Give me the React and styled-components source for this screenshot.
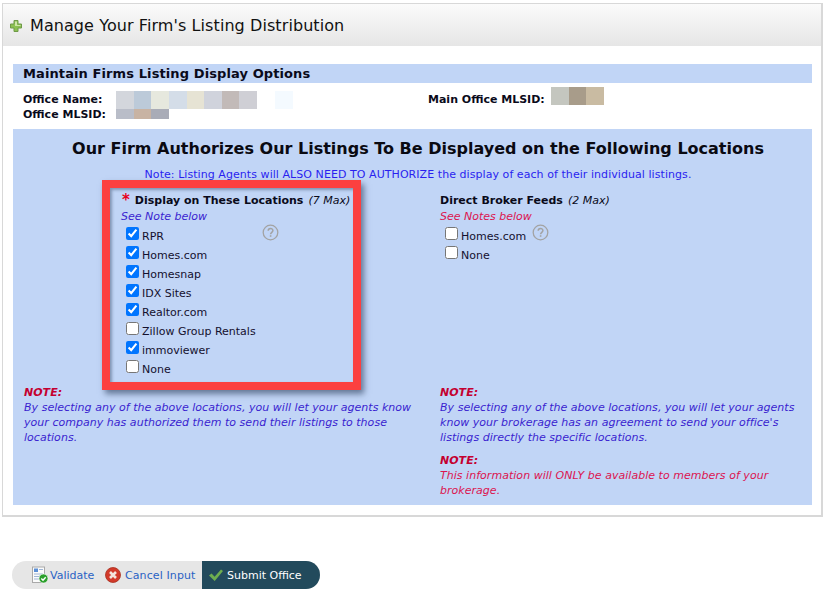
import React from "react";
import styled, { createGlobalStyle } from "styled-components";

const GlobalStyle = createGlobalStyle`
  html, body {
    margin: 0;
    padding: 0;
    background: #fff;
    font-family: "DejaVu Sans", Verdana, sans-serif;
    font-size: 11px;
    color: #000;
  }
`;

const Page = styled.div`
  width: 830px;
  height: 598px;
  padding: 3px 0 0 2px;
  box-sizing: border-box;
  overflow: hidden;
`;

const Panel = styled.div`
  width: 821px;
  height: 514px;
  box-sizing: border-box;
  border: 1px solid #d8d8d8;
  border-width: 1px 2px 2px 1px;
`;

const Header = styled.div`
  height: 42px;
  display: flex;
  align-items: center;
  gap: 7px;
  padding: 0 0 0 6px;
  background: linear-gradient(#fbfbfb, #e6e6e6);
  h1 {
    margin: 0;
    font-size: 16px;
    font-weight: 400;
    letter-spacing: 0.08px;
    color: #111;
  }
  svg {
    position: relative;
    top: 1px;
  }
`;

const Body = styled.div`
  padding: 18px 9px 0 10px;
`;

const Band = styled.div`
  height: 19px;
  line-height: 20px;
  background: #c1d5f6;
  padding-left: 10px;
  font-size: 13px;
  font-weight: 700;
  letter-spacing: 0.1px;
  color: #0a0a1a;
`;

const OfficeInfo = styled.div`
  display: grid;
  grid-template-columns: 405px 1fr;
  height: 46px;
  padding: 4px 0 0 10px;
  box-sizing: border-box;
`;

const InfoColumn = styled.div`
  padding-top: 4px;
`;

const InfoRow = styled.div`
  display: flex;
  align-items: center;
  height: ${(p) => p.$h}px;
  font-weight: 700;
  color: #0a0a1a;
`;

const InfoLabel = styled.span`
  width: ${(p) => p.$w}px;
  flex: none;
  margin-top: ${(p) => p.$mt || 0}px;
  margin-bottom: ${(p) => p.$mb || 0}px;
`;

const Mosaic = styled.div`
  display: flex;
  height: ${(p) => p.$h}px;
`;

const Tile = styled.div`
  width: ${(p) => p.$w || 17.625}px;
  margin-left: ${(p) => p.$gap || 0}px;
  background: ${(p) => p.$c};
`;

const BluePanel = styled.div`
  position: relative;
  height: 376px;
  background: #c1d5f6;
  padding-top: 10px;
  box-sizing: border-box;
`;

const Heading = styled.h2`
  margin: 0;
  padding-left: 11px;
  text-align: center;
  font-size: 16px;
  font-weight: 700;
  line-height: 20px;
  color: #0a0a12;
`;

const TopNote = styled.p`
  margin: 9px 0 0;
  padding-left: 11px;
  text-align: center;
  font-size: 11px;
  line-height: 14px;
  letter-spacing: 0.06px;
  color: #2a1ff0;
`;

const Columns = styled.div`
  display: grid;
  grid-template-columns: 427px 1fr;
  margin-top: 10px;
`;

const Column = styled.div`
  padding-left: ${(p) => p.$pad}px;
`;

const GroupTitle = styled.div`
  display: flex;
  align-items: center;
  height: 16px;
  font-weight: 700;
  color: #0a0a1a;
  i {
    font-weight: 400;
    margin-left: 5px;
  }
`;

const Star = styled.span`
  color: #e8001c;
  font-size: 15px;
  margin: 0 5px 0 1px;
`;

const SeeNote = styled.div`
  margin-top: 1px;
  height: 15px;
  line-height: 15px;
  font-style: italic;
  color: ${(p) => p.$c};
`;

const Options = styled.div`
  padding-left: ${(p) => p.$pad}px;
  margin-top: 3px;
  height: ${(p) => p.$h}px;
`;

const Option = styled.label`
  display: flex;
  align-items: center;
  height: 19px;
  color: #14102e;
  input {
    width: 13px;
    height: 13px;
    margin: 0 3px 0 0;
    position: relative;
    top: -3px;
    flex: none;
  }
  svg {
    margin-left: 6px;
    position: relative;
    top: -4px;
  }
`;

const HelpSlot = styled.div`
  position: absolute;
  left: 249px;
  top: 95px;
`;

const NoteBlock = styled.div`
  margin-top: ${(p) => p.$top || 0}px;
  width: ${(p) => p.$w}px;
  font-style: italic;
  line-height: 15px;
  letter-spacing: 0.03px;
  color: ${(p) => p.$c};
  b {
    display: block;
    color: #c40030;
  }
`;

const RedBox = styled.div`
  position: absolute;
  left: 89px;
  top: 51px;
  width: 259px;
  height: 210px;
  box-sizing: border-box;
  border: 8px solid #fc4040;
  box-shadow: 3px 4px 6px rgba(50, 70, 100, 0.65),
    inset 2px 2px 3px rgba(50, 70, 100, 0.45);
  pointer-events: none;
`;

const ButtonBar = styled.div`
  display: flex;
  height: 28px;
  margin: 44px 0 0 10px;
  width: 308px;
  border-radius: 14px;
  overflow: hidden;
  background: #e6e6e6;
`;

const BarButton = styled.div`
  display: flex;
  align-items: center;
  gap: ${(p) => p.$gap}px;
  padding-left: ${(p) => p.$pad}px;
  width: ${(p) => p.$w}px;
  flex: none;
  box-sizing: border-box;
  letter-spacing: ${(p) => p.$ls || 0}px;
  color: ${(p) => (p.$primary ? "#fff" : "#2a62c4")};
  background: ${(p) => (p.$primary ? "#224a5c" : "transparent")};
`;

const PlusIcon = () => (
  <svg width="14" height="14" viewBox="0 0 14 14">
    <path d="M5 1.5h4v3.5h3.5v4H9v3.5H5V9H1.5V5H5z" fill="#8cc152" stroke="#6f9a48" strokeWidth="1" />
    <path d="M6 2.5h2v3.5h3.5v1H6z" fill="#cfe6a8" />
  </svg>
);

const HelpIcon = () => (
  <svg width="17" height="17" viewBox="0 0 17 17">
    <circle cx="8.5" cy="8.5" r="7.3" fill="none" stroke="#a3a3a3" strokeWidth="1.3" />
    <path d="M6.2 6.8c0-3 4.7-3 4.7-.2 0 1.7-2.3 1.8-2.3 3.6" fill="none" stroke="#a3a3a3" strokeWidth="1.5" />
    <rect x="7.8" y="11.2" width="1.6" height="1.6" fill="#a3a3a3" />
  </svg>
);

const ValidateIcon = () => (
  <svg width="18" height="18" viewBox="0 0 18 18">
    <rect x="1.5" y="1" width="12" height="15.5" fill="#fbfbfb" stroke="#a9a9a9" />
    <rect x="3" y="2.5" width="4" height="3.5" fill="#5b8fd6" />
    <path d="M8 3.5h4M3 8h9M3 10.5h6M3 13h5" stroke="#9fb6d6" strokeWidth="1" />
    <circle cx="12.5" cy="12.5" r="4.5" fill="#2ca02c" stroke="#fff" strokeWidth=".6" />
    <path d="M10.3 12.5l1.7 1.7 2.7-3" fill="none" stroke="#fff" strokeWidth="1.4" />
  </svg>
);

const CancelIcon = () => (
  <svg width="16" height="16" viewBox="0 0 16 16">
    <circle cx="8" cy="8" r="7.5" fill="#d23a2a" />
    <circle cx="8" cy="8" r="7.5" fill="none" stroke="#a8301f" strokeWidth=".8" />
    <path d="M5 5l6 6M11 5l-6 6" stroke="#f4e4dc" strokeWidth="2.6" />
  </svg>
);

const CheckIcon = () => (
  <svg width="16" height="14" viewBox="0 0 16 14">
    <path d="M1 7.5l2.6-2 3 3.2L13 1.5l2 1.6-8.3 10z" fill="#6dae4f" />
  </svg>
);

const locations = [
  ["RPR", true],
  ["Homes.com", true],
  ["Homesnap", true],
  ["IDX Sites", true],
  ["Realtor.com", true],
  ["Zillow Group Rentals", false],
  ["immoviewer", true],
  ["None", false],
];

function App() {
  return (
    <Page>
      <GlobalStyle />
      <Panel>
        <Header>
          <PlusIcon />
          <h1>Manage Your Firm's Listing Distribution</h1>
        </Header>
        <Body>
          <Band>Maintain Firms Listing Display Options</Band>
          <OfficeInfo>
            <InfoColumn>
              <InfoRow $h={18}>
                <InfoLabel $w={93} $mb={2}>Office Name:</InfoLabel>
                <Mosaic $h={18}>
                  {["#d3d6dc", "#bccad9", "#e6e8de", "#d4dde8", "#e6e3d4", "#d0d3dc", "#c2bab8", "#cfcfd5"].map((c) => (
                    <Tile key={c} $c={c} />
                  ))}
                  <Tile $c="#f4faff" $gap={18} />
                </Mosaic>
              </InfoRow>
              <InfoRow $h={10}>
                <InfoLabel $w={93}>Office MLSID:</InfoLabel>
                <Mosaic $h={10}>
                  {["#b9bdc8", "#c8b3a3", "#a9acb7"].map((c) => (
                    <Tile key={c} $c={c} />
                  ))}
                </Mosaic>
              </InfoRow>
            </InfoColumn>
            <InfoRow $h={18}>
              <InfoLabel $w={123} $mt={6}>Main Office MLSID:</InfoLabel>
              <Mosaic $h={18}>
                {["#c4c6bf", "#a89c8a", "#c9bba2"].map((c) => (
                  <Tile key={c} $c={c} />
                ))}
              </Mosaic>
            </InfoRow>
          </OfficeInfo>
          <BluePanel>
            <Heading>Our Firm Authorizes Our Listings To Be Displayed on the Following Locations</Heading>
            <TopNote>Note: Listing Agents will ALSO NEED TO AUTHORIZE the display of each of their individual listings.</TopNote>
            <Columns>
              <Column $pad={11}>
                <Column $pad={97}>
                  <GroupTitle>
                    <Star>*</Star>
                    Display on These Locations <i>(7 Max)</i>
                  </GroupTitle>
                  <SeeNote $c="#3a1fd0">See Note below</SeeNote>
                  <Options $pad={5} $h={151}>
                    {locations.map(([name, checked]) => (
                      <Option key={name}>
                        <input type="checkbox" defaultChecked={checked} />
                        {name}
                      </Option>
                    ))}
                  </Options>
                </Column>
                <NoteBlock $top={7} $w={395} $c="#3a1fd0">
                  <b>NOTE:</b>
                  By selecting any of the above locations, you will let your agents know your company has authorized them to send their listings to those locations.
                </NoteBlock>
              </Column>
              <Column $pad={0}>
                <GroupTitle>
                  Direct Broker Feeds <i>(2 Max)</i>
                </GroupTitle>
                <SeeNote $c="#dc1450">See Notes below</SeeNote>
                <Options $pad={5} $h={151}>
                  <Option>
                    <input type="checkbox" />
                    Homes.com
                    <HelpIcon />
                  </Option>
                  <Option>
                    <input type="checkbox" />
                    None
                  </Option>
                </Options>
                <NoteBlock $top={7} $w={365} $c="#3a1fd0">
                  <b>NOTE:</b>
                  By selecting any of the above locations, you will let your agents know your brokerage has an agreement to send your office's listings directly the specific locations.
                </NoteBlock>
                <NoteBlock $top={8} $w={365} $c="#dc1450">
                  <b>NOTE:</b>
                  This information will ONLY be available to members of your brokerage.
                </NoteBlock>
              </Column>
            </Columns>
            <HelpSlot>
              <HelpIcon />
            </HelpSlot>
            <RedBox />
          </BluePanel>
        </Body>
      </Panel>
      <ButtonBar>
        <BarButton $w={85} $pad={19} $gap={1}>
          <ValidateIcon />
          Validate
        </BarButton>
        <BarButton $w={105} $pad={8} $gap={4} $ls={0.1}>
          <CancelIcon />
          Cancel Input
        </BarButton>
        <BarButton $primary $w={118} $pad={6} $gap={3}>
          <CheckIcon />
          Submit Office
        </BarButton>
      </ButtonBar>
    </Page>
  );
}

export default App;
